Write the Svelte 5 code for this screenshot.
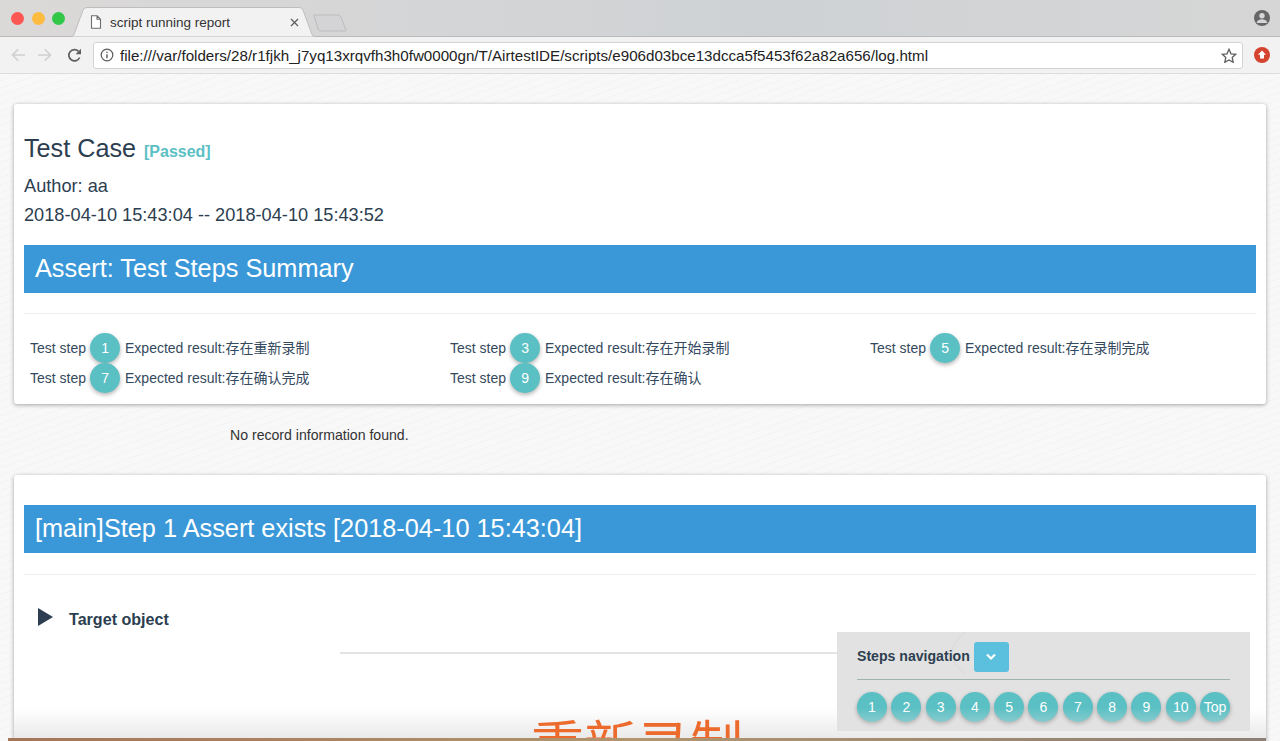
<script>
  const summary = [
    { step: 1, expected: "存在重新录制" },
    { step: 3, expected: "存在开始录制" },
    { step: 5, expected: "存在录制完成" },
    { step: 7, expected: "存在确认完成" },
    { step: 9, expected: "存在确认" },
  ];
  const navSteps = ["1", "2", "3", "4", "5", "6", "7", "8", "9", "10", "Top"];
</script>

<div class="window">
  <div class="tabstrip">
    <div class="lights">
      <span class="light red"></span>
      <span class="light yellow"></span>
      <span class="light green"></span>
    </div>
    <div class="tab">
      <svg class="tab-shape" width="246" height="30" viewBox="0 0 246 30">
        <path d="M0 29.500h1q2 0 3-2L13 3q1-2.500 4-2.500h212q3 0 4 2.500l9 24.500q1 2 3 2h1" fill="#f2f2f2" stroke="#bdbdbd" />
      </svg>
      <svg class="doc" width="12" height="14" viewBox="0 0 12 14">
        <path d="M1.500 .8h5.600l3.400 3.400v9H1.500z M7 .8v3.500h3.500" fill="#fff" stroke="#6e6e6e" stroke-width="1.100" />
      </svg>
      <span class="tab-title">script running report</span>
      <svg class="tab-close" width="9" height="9" viewBox="0 0 9 9">
        <path d="M1 1l7 7M8 1l-7 7" stroke="#5f5f5f" stroke-width="1.300" />
      </svg>
    </div>
    <svg class="new-tab" width="34" height="18" viewBox="0 0 34 18">
      <path d="M1 1h24q2 0 3 2l5 13q0 1-1 1H8q-2 0-3-2L1 2z" fill="#d4d4d6" stroke="#bcbcbe" />
    </svg>
    <svg class="profile" width="16" height="16" viewBox="0 0 16 16">
      <circle cx="8" cy="8" r="8" fill="#666" />
      <circle cx="8" cy="5.800" r="2.700" fill="#d6d6d8" />
      <path d="M2.800 12.200c1-2.300 3-3 5.200-3s4.200.7 5.200 3v.8H2.800z" fill="#d6d6d8" />
    </svg>
  </div>

  <div class="toolbar">
    <svg class="nav-icon back" width="14" height="14" viewBox="0 0 14 14">
      <path d="M14 7H1.500M7.200 1.300L1.500 7l5.700 5.700" fill="none" stroke="#d0d0d0" stroke-width="1.600" />
    </svg>
    <svg class="nav-icon forward" width="14" height="14" viewBox="0 0 14 14">
      <path d="M0 7h12.500M6.800 1.300L12.500 7l-5.700 5.700" fill="none" stroke="#d0d0d0" stroke-width="1.600" />
    </svg>
    <svg class="nav-icon reload" width="15" height="15" viewBox="0 0 15 15">
      <path d="M12.600 9.500A5.600 5.600 0 1 1 11.500 3.400" fill="none" stroke="#5e5e5e" stroke-width="1.700" />
      <path d="M14 .8v5.400H8.600z" fill="#5e5e5e" />
    </svg>
    <div class="omnibox">
      <svg width="14" height="14" viewBox="0 0 14 14">
        <circle cx="7" cy="7" r="5.800" fill="none" stroke="#5a5a5a" stroke-width="1.200" />
        <path d="M7 6.200v4M7 3.700v1.400" stroke="#5a5a5a" stroke-width="1.400" />
      </svg>
      <span class="url">file:///var/folders/28/r1fjkh_j7yq13xrqvfh3h0fw0000gn/T/AirtestIDE/scripts/e906d03bce13dcca5f5453f62a82a656/log.html</span>
      <svg class="star" width="16" height="15" viewBox="0 0 16 15">
        <path d="M8 1.300l2 4.500 4.800.5-3.600 3.200 1 4.800L8 11.900l-4.200 2.400 1-4.800L1.200 6.300 6 5.800z" fill="none" stroke="#5e5e5e" stroke-width="1.300" />
      </svg>
    </div>
    <svg class="ext" width="16" height="16" viewBox="0 0 16 16">
      <circle cx="8" cy="8" r="8" fill="#d5442f" />
      <path d="M8 3.500l4 4.300H10v3.700H6V7.800H4z" fill="#fff" />
    </svg>
  </div>

  <main class="page">
    <section class="card summary-card">
      <h1 class="title">Test Case <small class="passed">[Passed]</small></h1>
      <p class="meta author">Author: aa</p>
      <p class="meta">2018-04-10 15:43:04 -- 2018-04-10 15:43:52</p>
      <h2 class="banner">Assert: Test Steps Summary</h2>
      <hr />
      <div class="summary-grid">
        {#each summary as row}
          <div class="summary-row">
            <span>Test step</span>
            <span class="circle">{row.step}</span>
            <span class="expected">Expected result:{row.expected}</span>
          </div>
        {/each}
      </div>
    </section>

    <p class="no-record">No record information found.</p>

    <section class="card step-card">
      <h2 class="banner">[main]Step 1 Assert exists [2018-04-10 15:43:04]</h2>
      <hr />
      <div class="target">
        <svg width="15" height="18" viewBox="0 0 15 18"><path d="M0 0l15 9L0 18z" fill="#2c3e50" /></svg>
        <strong>Target object</strong>
      </div>
      <div class="shot">
        <span class="shot-text">重新录制</span>
      </div>
    </section>
  </main>

  <aside class="steps-nav">
    <svg class="ghost-arc" width="16" height="42" viewBox="0 0 16 42">
      <path d="M15 0Q1 10 1 21t14 21" fill="none" stroke="#dcdcdc" stroke-width="1.500" />
    </svg>
    <div class="nav-head">
      <strong>Steps navigation</strong>
      <button class="nav-toggle" aria-label="Toggle">
        <svg width="12" height="8" viewBox="0 0 12 8">
          <path d="M2 1.500l4 4 4-4" fill="none" stroke="#fff" stroke-width="2.200" />
        </svg>
      </button>
    </div>
    <div class="nav-steps">
      {#each navSteps as s}
        <span class="circle">{s}</span>
      {/each}
    </div>
  </aside>

  <div class="fade"></div>
  <div class="desktop-edge"></div>
</div>

<style>
  :global(body) {
    margin: 0;
    background: #f8f8f8;
  }

  .window {
    position: relative;
    height: 741px;
    overflow: hidden;
    font-family: "Liberation Sans", Arial, "Noto Sans CJK SC", sans-serif;
    color: #2c3e50;
    display: flex;
    flex-direction: column;
  }

  .tabstrip {
    height: 37px;
    flex: none;
    display: flex;
    align-items: flex-end;
    padding: 0 10px 0 11px;
    box-sizing: border-box;
    background: linear-gradient(90deg, #dbd9d8, #cfd2d5 60%, #d6d6d6);
    border-bottom: 1px solid #b9b9b9;
  }

  .lights {
    display: flex;
    gap: 7.500px;
    align-self: flex-start;
    margin-top: 12px;
  }

  .light {
    width: 13px;
    height: 13px;
    border-radius: 50%;
  }

  .red { background: #fc5753; }
  .yellow { background: #fdbc40; }
  .green { background: #33c748; }

  .tab {
    position: relative;
    width: 246px;
    height: 30px;
    margin-left: 5px;
    margin-bottom: -1px;
    padding: 0 17px 0 20px;
    box-sizing: border-box;
    display: flex;
    align-items: center;
    font-size: 13.500px;
    color: #333;
  }

  .tab-shape {
    position: absolute;
    left: 0;
    top: 0;
  }

  .doc,
  .tab-title,
  .tab-close {
    position: relative;
  }

  .tab-title {
    margin-left: 8px;
    flex: 1;
    white-space: nowrap;
  }

  .new-tab {
    margin-left: -3px;
    margin-bottom: 4px;
  }

  .profile {
    margin-left: auto;
    align-self: flex-start;
    margin-top: 10px;
  }

  .toolbar {
    height: 37px;
    flex: none;
    display: flex;
    align-items: center;
    padding: 0 10px 0 11px;
    box-sizing: border-box;
    background: #f2f2f2;
    border-bottom: 1px solid #dcdcdc;
  }

  .back { margin-right: 13px; }
  .forward { margin-right: 15px; }
  .reload { margin-right: 11px; }

  .omnibox {
    flex: 1;
    height: 27px;
    margin-right: 11px;
    padding: 0 5px 0 6px;
    box-sizing: border-box;
    display: flex;
    align-items: center;
    background: #fff;
    border: 1px solid #d2d2d2;
    border-radius: 3px;
  }

  .url {
    flex: 1;
    margin-left: 6px;
    font-size: 15.150px;
    color: #222;
    white-space: nowrap;
  }

  .page {
    flex: 1;
    padding: 30px 14px 0;
    min-height: 0;
    background-color: #f8f8f8;
    background-image: repeating-linear-gradient(160deg, transparent 0 6px, #f4f4f4 6px 7px);
  }

  .card {
    background: #fff;
    border-radius: 3px;
    box-shadow: 0 1px 4px rgba(0, 0, 0, 0.35);
    padding: 0 10px;
  }

  .summary-card {
    height: 300px;
    box-sizing: border-box;
    padding-top: 28px;
  }

  .title {
    margin: 0;
    font-size: 25.200px;
    font-weight: 400;
    line-height: 32px;
  }

  .passed {
    margin-left: 1px;
    font-size: 16px;
    font-weight: 700;
    color: #5bc0c4;
  }

  .meta {
    margin: 9px 0 0;
    font-size: 18.200px;
    line-height: 20px;
  }

  .author {
    margin-top: 8px;
  }

  .banner {
    margin: 0;
    height: 48px;
    padding-left: 11px;
    background: #3a98d8;
    color: #fff;
    font-size: 25.300px;
    font-weight: 400;
    line-height: 47px;
  }

  .summary-card .banner {
    margin-top: 20px;
  }

  hr {
    margin: 20px 0 0;
    border: 0;
    border-top: 1px solid #eee;
  }

  .step-card hr {
    margin-top: 21px;
  }

  .summary-grid {
    display: grid;
    grid-template-columns: repeat(3, 420px);
    grid-auto-rows: 30px;
    padding: 19px 0 0 6px;
  }

  .summary-row {
    display: flex;
    align-items: center;
    gap: 4px;
    font-size: 14px;
    line-height: 20px;
    color: #34495e;
    white-space: nowrap;
  }

  .summary-row span {
    height: 20px;
  }

  .summary-row .circle {
    height: 30px;
  }

  .expected {
    margin-left: 1px;
  }

  .circle {
    width: 30px;
    height: 30px;
    flex: none;
    border-radius: 50%;
    display: flex;
    align-items: center;
    justify-content: center;
    background: #5bc0c4;
    color: #fff;
    font-size: 14px;
    box-shadow: 0 2px 4px rgba(0, 0, 0, 0.3);
  }

  .no-record {
    margin: 23px 0 0 216px;
    font-size: 14.100px;
    line-height: 17px;
    color: #333;
  }

  .step-card {
    margin-top: 31px;
    padding-top: 30px;
    height: 300px;
    box-sizing: border-box;
  }

  .target {
    margin: 33px 0 0 14px;
    display: flex;
    align-items: center;
    gap: 16px;
    font-size: 16.100px;
    height: 24px;
  }

  .target svg {
    margin-bottom: 6px;
  }

  .target strong {
    margin-bottom: 2px;
  }

  .shot {
    margin: 20px 30px 0 316px;
    border-top: 2px solid #e4e4e4;
    padding: 58px 0 0 191px;
  }

  .shot-text {
    position: relative;
    z-index: 1;
    display: inline-block;
    font-family: "Noto Sans CJK SC", sans-serif;
    font-size: 53px;
    line-height: 60px;
    color: #ec6a2c;
  }

  .steps-nav {
    position: absolute;
    left: 837px;
    top: 632px;
    width: 413px;
    height: 99px;
    box-sizing: border-box;
    padding: 10px 20px 0;
    background: #e2e2e2;
  }

  .ghost-arc {
    position: absolute;
    left: 114px;
    top: 0;
  }

  .nav-head {
    position: relative;
    display: flex;
    align-items: flex-start;
    gap: 4px;
    height: 37px;
    font-size: 14.100px;
    line-height: 28px;
    border-bottom: 1px solid #9fb3b0;
  }

  .nav-toggle {
    width: 35px;
    height: 30px;
    padding: 0;
    border: 0;
    border-radius: 3px;
    background: #5bc0de;
    display: flex;
    align-items: center;
    justify-content: center;
  }

  .nav-steps {
    display: flex;
    gap: 4.300px;
    margin-top: 12px;
  }

  .fade {
    position: absolute;
    left: 14px;
    right: 14px;
    bottom: 3px;
    height: 30px;
    background: linear-gradient(to bottom, rgba(235, 235, 235, 0), rgba(225, 225, 225, 0.7));
    pointer-events: none;
  }

  .desktop-edge {
    position: absolute;
    left: 8px;
    right: 14px;
    bottom: 0;
    height: 3px;
    z-index: 2;
    background: linear-gradient(90deg, #a5755a, #b09570 50%, #8e7f74);
  }
</style>
